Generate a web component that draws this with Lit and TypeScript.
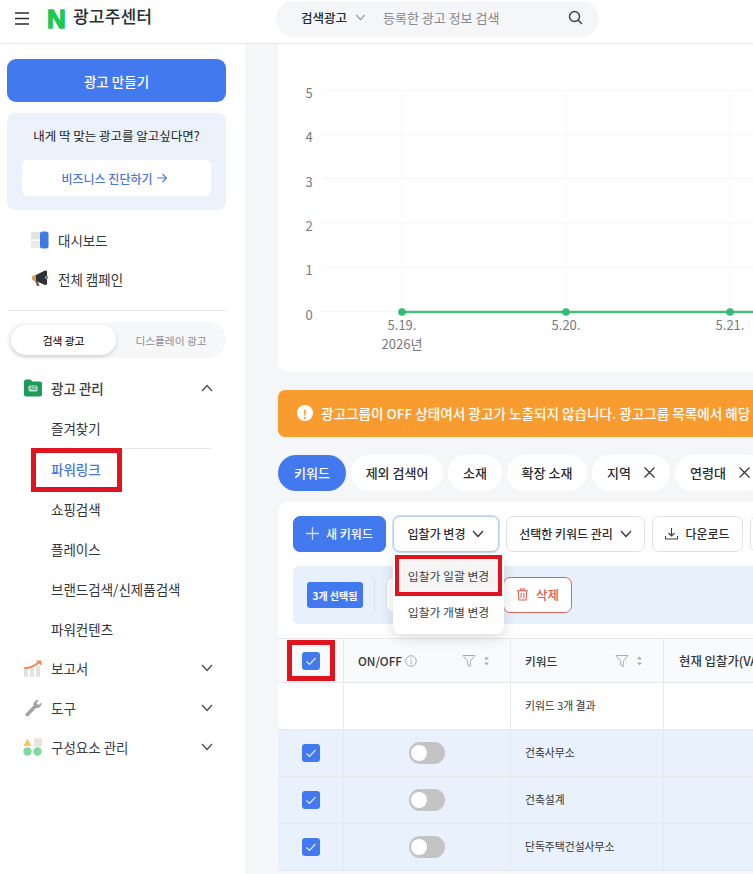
import { LitElement, html, css, svg } from 'lit';
import { customElement } from 'lit/decorators.js';

const chevron = (up = false) => html`<svg class="chev" viewBox="0 0 12 8" aria-hidden="true">
  <path d=${up ? 'M1 7l5-5.5L11 7' : 'M1 1l5 5.5L11 1'} fill="none" stroke="currentColor" stroke-width="1.2"/>
</svg>`;

const cross = html`<svg class="x" viewBox="0 0 11 11" aria-hidden="true"><path d="M0.5 0.5l10 10M10.5 0.5l-10 10" stroke="#2b2d31" stroke-width="1.1"/></svg>`;

const check = html`<span class="check"><svg viewBox="0 0 18 18" aria-hidden="true">
  <path d="M4.5 9.5l3 3 6-6.5" fill="none" stroke="#dfe9fc" stroke-width="1.2"/>
</svg></span>`;

const filterSort = html`<span class="tools">
  <svg class="funnel" viewBox="0 0 14 14" aria-hidden="true"><path d="M1 1.500h12L8.300 7.200V12.500L5.700 11V7.200z" fill="none" stroke="#a9adb3" stroke-width="1"/></svg>
  <svg class="sort" viewBox="0 0 7 12" aria-hidden="true"><path d="M3.500 1.500L6 4.500H1zM3.500 10.500L1 7.500h5z" fill="#a9adb3"/></svg>
</span>`;

/** Sidebar navigation with the search/display toggle. */
@customElement('side-nav')
export class SideNav extends LitElement {
  render() {
    return html`
      <button class="create">광고 만들기</button>
      <div class="promo">
        <p>내게 딱 맞는 광고를 알고싶다면?</p>
        <button>
          비즈니스 진단하기
          <svg viewBox="0 0 10 10" aria-hidden="true"><path d="M0 5h9M5.500 1l4 4-4 4" fill="none" stroke="#4a78d8" stroke-width="1.100"/></svg>
        </button>
      </div>
      <a class="top first">
        <svg viewBox="0 0 20 18" aria-hidden="true">
          <rect x="1" y="1" width="10" height="7.500" fill="#e4e4e0"/><rect x="1" y="10" width="10" height="7" fill="#ecebe6"/>
          <rect x="10" y="0.500" width="8.500" height="17" rx="2.500" fill="#3f7ae8"/>
        </svg>
        대시보드
      </a>
      <a class="top">
        <svg viewBox="0 0 20 18" aria-hidden="true">
          <circle cx="5" cy="8" r="3" fill="#dc9a52"/>
          <path d="M6 5L15 0.500 17 1V14.500L15 15 6 11z" fill="#2f3136"/>
          <circle cx="16.500" cy="7.500" r="1.800" fill="#85888e"/><path d="M5 11h3l1.500 5H7z" fill="#7d6243"/>
        </svg>
        전체 캠페인
      </a>
      <hr />
      <div class="switch"><span class="on">검색 광고</span><span>디스플레이 광고</span></div>
      <a class="group open">
        <svg viewBox="0 0 20 18" aria-hidden="true">
          <path d="M2.500 0.500h5l2 2h7.500a2 2 0 0 1 2 2v11a2 2 0 0 1-2 2h-14a2 2 0 0 1-2-2v-13a2 2 0 0 1 2-2z" fill="#1f9a5b"/>
          <rect x="5.500" y="6.500" width="9" height="6" rx="1.500" fill="#bfe6d0"/>
          <text x="10" y="11.300" text-anchor="middle" class="ad">AD</text>
        </svg>
        <b>광고 관리</b>${chevron(true)}
      </a>
      <a class="sub fav">즐겨찾기</a>
      <a class="sub active">파워링크</a>
      <a class="sub">쇼핑검색</a>
      <a class="sub">플레이스</a>
      <a class="sub">브랜드검색/신제품검색</a>
      <a class="sub">파워컨텐츠</a>
      <a class="group">
        <svg viewBox="0 0 20 18" aria-hidden="true">
          <rect x="1" y="11" width="4" height="7" fill="#e6e3de"/><rect x="7" y="9" width="4" height="9" fill="#e6e3de"/><rect x="13" y="7" width="4" height="11" fill="#e6e3de"/>
          <path d="M1 9.500C7 9 12 7 16 3" fill="none" stroke="#ee8a5a" stroke-width="2"/><path d="M13 1.500h5.500V7z" fill="#ee8a5a"/>
        </svg>
        보고서${chevron()}
      </a>
      <a class="group">
        <svg viewBox="0 0 20 18" aria-hidden="true">
          <path d="M2 15.500L10.500 6.500C10 3.500 12.500 0.500 16 1L13.500 4l2 2 3-2.500c.5 3.500-2.500 6-5.500 5.500L4.500 18z" fill="#a3a4a2"/>
        </svg>
        도구${chevron()}
      </a>
      <a class="group">
        <svg viewBox="0 0 20 18" aria-hidden="true">
          <path d="M4.500 0.500L8.500 8H0.500z" fill="#f2c75c"/><rect x="11" y="0.500" width="8" height="8" fill="#e7e3de"/>
          <circle cx="4.500" cy="13.500" r="4.200" fill="#7ed99a"/><circle cx="14.500" cy="13.500" r="4.200" fill="#7ed99a"/>
        </svg>
        구성요소 관리${chevron()}
      </a>
    `;
  }

  static styles = css`
    :host {
      display: block;
      width: 245px;
      flex: none;
      background: #fff;
      box-sizing: border-box;
      padding: 15px 19px 0 7px;
      font-family: 'Noto Sans CJK KR', 'Noto Sans', sans-serif;
      color: #33363b;
      font-size: 13.5px;
    }
    button {
      font: inherit;
      border: none;
      cursor: pointer;
    }
    .create {
      display: block;
      width: 100%;
      height: 43px;
      border-radius: 9px;
      background: #4379ee;
      color: #fff;
      font-weight: 500;
    }
    .promo {
      margin-top: 11px;
      height: 97px;
      box-sizing: border-box;
      padding: 13px 15px 0;
      background: #ebf2fc;
      border-radius: 8px;
      text-align: center;
    }
    .promo p {
      margin: 0 0 14px;
      font-size: 12.5px;
      line-height: 20px;
      color: #222;
    }
    .promo button {
      display: flex;
      align-items: center;
      justify-content: center;
      gap: 4px;
      width: 100%;
      height: 36px;
      padding: 0 5px 0 0;
      border-radius: 6px;
      background: #fff;
      color: #4a78d8;
      font-size: 12px;
      font-weight: 500;
    }
    .promo button svg {
      width: 10px;
      height: 10px;
    }
    a {
      display: flex;
      align-items: center;
      height: 40px;
    }
    a svg {
      width: 20px;
      height: 18px;
      flex: none;
      margin-right: 8px;
    }
    .ad {
      font-family: 'Liberation Sans', sans-serif;
      font-size: 4.500px;
      font-weight: 700;
      fill: #1f9a5b;
    }
    .top {
      height: 39px;
      padding-left: 23px;
    }
    .first {
      margin-top: 10px;
    }
    hr {
      margin: 12px 0 11px 1px;
      border: none;
      border-top: 1px solid #e8e9eb;
    }
    .switch {
      display: flex;
      height: 36px;
      border-radius: 18px;
      background: #f6f7f9;
      font-size: 10.700px;
      color: #8a8d92;
    }
    .switch span {
      flex: 1;
      display: flex;
      align-items: center;
      justify-content: center;
    }
    .switch .on {
      flex: none;
      width: 105px;
      margin: 3px 0 3px 4px;
      background: #fff;
      border-radius: 15px;
      color: #26282c;
      font-weight: 500;
      box-shadow: 0 2px 4px rgba(0, 0, 0, 0.14);
    }
    .group {
      padding: 0 13px 0 16px;
      height: 39.500px;
      color: #3a3d42;
    }
    .group.open {
      margin-top: 10px;
    }
    .group b {
      font-weight: 500;
    }
    .chev {
      width: 12px;
      height: 8px;
      margin: 0 0 0 auto;
      color: #44474c;
    }
    .sub {
      padding-left: 44px;
    }
    .fav {
      position: relative;
      height: 41px;
      box-sizing: border-box;
      padding-bottom: 1px;
    }
    .fav::after {
      content: '';
      position: absolute;
      left: 44px;
      right: 15px;
      bottom: 0;
      border-bottom: 1px solid #e8e9eb;
    }
    .active {
      position: relative;
      color: #4a78e0;
      font-weight: 500;
    }
    .active::after {
      content: '';
      position: absolute;
      left: 24px;
      top: -1px;
      width: 91px;
      height: 44px;
      box-sizing: border-box;
      border: 5px solid #e0141f;
    }
  `;
}

@customElement('trend-chart')
export class TrendChart extends LitElement {
  render() {
    const rows = [5, 4, 3, 2, 1, 0];
    const xs = [124, 288, 452];
    return html`<svg viewBox="0 0 1000 328" width="1000" height="328">
      ${xs.map((x) => svg`<line x1=${x} x2=${x} y1="46" y2="268" stroke="#f7f7f8"/>`)}
      ${rows.map((n, i) => {
        const y = 46 + i * 44.3;
        return svg`<line x1="44" x2="1000" y1=${y} y2=${y} stroke="#f5f5f6"/>
          <text x="31" y=${y + 8} text-anchor="middle" class="lab">${n}</text>`;
      })}
      <line x1="124" x2="1000" y1="268" y2="268" stroke="#46bd7c" stroke-width="2.500"/>
      ${xs.map((x) => svg`<circle cx=${x} cy="268" r="3.800" fill="#32bd70"/>`)}
      ${['5.19.', '5.20.', '5.21.'].map(
        (t, i) => svg`<text x=${xs[i]} y="286" text-anchor="middle" class="lab">${t}</text>`
      )}
      <text x="124" y="305" text-anchor="middle" class="lab">2026년</text>
    </svg>`;
  }

  static styles = css`
    :host {
      display: block;
      height: 328px;
      background: #fff;
      border-radius: 0 0 10px 10px;
    }
    svg {
      display: block;
    }
    .lab {
      font-family: 'Noto Sans CJK KR', 'Noto Sans', sans-serif;
      font-size: 13px;
      fill: #777a7f;
    }
  `;
}

@customElement('keyword-table')
export class KeywordTable extends LitElement {
  render() {
    const keywords = ['건축사무소', '건축설계', '단독주택건설사무소'];
    return html`
      <div class="row head">
        <div class="c mid boxed">${check}</div>
        <div class="c onoff">ON/OFF
          <svg class="info" viewBox="0 0 12 12" aria-hidden="true"><circle cx="6" cy="6" r="5.300" fill="none" stroke="#a9adb3"/><path d="M6 5.200V9.500M6 2.500v1.200" stroke="#a9adb3"/></svg>
          ${filterSort}
        </div>
        <div class="c">키워드 ${filterSort}</div>
        <div class="c price">현재 입찰가(VAT미포함)</div>
      </div>
      <div class="row">
        <div class="c"></div><div class="c"></div><div class="c small">키워드 3개 결과</div><div class="c"></div>
      </div>
      ${keywords.map(
        (k) => html`<div class="row sel">
          <div class="c mid">${check}</div>
          <div class="c mid"><span class="toggle"></span></div>
          <div class="c small">${k}</div>
          <div class="c"></div>
        </div>`
      )}
    `;
  }

  static styles = css`
    :host {
      display: block;
      font-size: 11.700px;
      color: #33363b;
      background: #fff;
      border-top: 1px solid #e7e8ea;
    }
    .row {
      display: grid;
      grid-template-columns: 65px 167px 153px 1fr;
      height: 47px;
      box-sizing: border-box;
      border-bottom: 1px solid #e7e8ea;
    }
    .row.head {
      height: 44px;
      background: #f9fafb;
      font-weight: 500;
    }
    .row.sel {
      background: #e9f1fc;
    }
    .c {
      display: flex;
      align-items: center;
      padding-left: 14px;
      border-left: 1px solid #e7e8ea;
      min-width: 0;
      white-space: nowrap;
    }
    .c:first-child {
      border-left: none;
    }
    .mid {
      justify-content: center;
      padding: 0;
    }
    .price {
      padding-left: 15px;
      font-size: 12.400px;
    }
    .small {
      font-size: 10.800px;
      font-weight: 400;
      padding-bottom: 2px;
      box-sizing: border-box;
    }
    .boxed {
      position: relative;
    }
    .boxed::after {
      content: '';
      position: absolute;
      left: 9px;
      top: 1px;
      width: 48px;
      height: 41px;
      box-sizing: border-box;
      border: 5px solid #e0141f;
    }
    .check {
      display: block;
      width: 18px;
      height: 18px;
      border-radius: 3px;
      background: #4379ee;
    }
    .check svg {
      display: block;
    }
    .info {
      width: 12px;
      height: 12px;
      margin-left: 3px;
    }
    .tools {
      margin-left: auto;
      margin-right: 20px;
      display: flex;
      align-items: center;
      gap: 7px;
    }
    .funnel {
      width: 14px;
      height: 14px;
    }
    .sort {
      width: 7px;
      height: 12px;
    }
    .toggle {
      position: relative;
      display: block;
      width: 36px;
      height: 22px;
      border-radius: 11px;
      background: #c4c4c4;
    }
    .toggle::after {
      content: '';
      position: absolute;
      left: 2px;
      top: 3px;
      width: 16px;
      height: 16px;
      border-radius: 50%;
      background: #fff;
    }
  `;
}

@customElement('app-root')
export class AppRoot extends LitElement {
  render() {
    return html`
      <header>
        <svg class="burger" viewBox="0 0 14 13" aria-hidden="true"><path d="M0 1h14M0 6.500h14M0 12h14" stroke="#2b2d31" stroke-width="1.500"/></svg>
        <span class="logo">N</span>
        <strong>광고주센터</strong>
        <div class="search">
          <b>검색광고</b>${chevron()}
          <span class="hint">등록한 광고 정보 검색</span>
          <svg class="glass" viewBox="0 0 15 15" aria-hidden="true"><circle cx="6.500" cy="6.500" r="5" fill="none" stroke="#3a3d42" stroke-width="1.400"/><path d="M10 10l4 4" stroke="#3a3d42" stroke-width="1.400"/></svg>
        </div>
      </header>
      <div class="body">
        <side-nav></side-nav>
        <main>
          <trend-chart></trend-chart>
          <div class="alert">
            <span class="bang">!</span>
            광고그룹이 OFF 상태여서 광고가 노출되지 않습니다. 광고그룹 목록에서 해당
          </div>
          <nav>
            <span class="tab on">키워드</span>
            <span class="tab w92">제외 검색어</span>
            <span class="tab w54">소재</span>
            <span class="tab w80">확장 소재</span>
            <span class="tab w78">지역 ${cross}</span>
            <span class="tab w90">연령대 ${cross}</span>
          </nav>
          <section>
            <div class="bar">
              <button class="primary">
                <svg viewBox="0 0 12 12" aria-hidden="true"><path d="M6 0v12M0 6h12" stroke="#cfdcfa" stroke-width="1.200"/></svg>
                새 키워드
              </button>
              <div class="wrap">
                <button class="focus">입찰가 변경 ${chevron()}</button>
                <div class="menu">
                  <div class="item picked">입찰가 일괄 변경</div>
                  <div class="item">입찰가 개별 변경</div>
                </div>
              </div>
              <button class="b139">선택한 키워드 관리 ${chevron()}</button>
              <button class="b91">
                <svg viewBox="0 0 13 13" aria-hidden="true"><path d="M6.500 1v8M3.500 6l3 3 3-3M0.500 9v3h12V9" fill="none" stroke="#3a3d42" stroke-width="1.100"/></svg>
                다운로드
              </button>
              <button class="b91"></button>
            </div>
            <div class="selected">
              <span class="count">3개 선택됨</span>
              <span class="sep"></span>
              <button class="ghost"></button>
              <button class="del">
                <svg viewBox="0 0 13 14" aria-hidden="true"><path d="M0.500 3h12M4.500 3V1h4v2M2 3l.7 10h7.600L11 3M5 5.500V11M8 5.500V11" fill="none" stroke="#df5a4e" stroke-width="1.100"/></svg>
                삭제
              </button>
            </div>
          </section>
          <keyword-table></keyword-table>
        </main>
      </div>
    `;
  }

  static styles = css`
    :host {
      display: block;
      width: 753px;
      height: 874px;
      overflow: hidden;
      background: #f5f6f8;
      font-family: 'Noto Sans CJK KR', 'Noto Sans', sans-serif;
      color: #33363b;
    }
    header {
      display: flex;
      align-items: center;
      height: 44px;
      box-sizing: border-box;
      padding: 0 0 6px 15px;
      background: #fff;
      border-bottom: 1px solid #e6e7e9;
    }
    .burger {
      width: 14px;
      height: 13px;
      flex: none;
    }
    .logo {
      margin-left: 18px;
      width: 21px;
      font-family: 'Liberation Sans', sans-serif;
      font-size: 26px;
      line-height: 26px;
      font-weight: 700;
      color: #1fc84f;
      -webkit-text-stroke: 1.400px #1fc84f;
    }
    strong {
      margin: 0 0 6px 5px;
      width: 100px;
      font-size: 17.200px;
      font-weight: 500;
      color: #2b2d31;
    }
    .search {
      margin: 0 0 0 103px;
      width: 323px;
      height: 36px;
      box-sizing: border-box;
      padding: 0 16px 2px 25px;
      display: flex;
      align-items: center;
      background: #f5f6f7;
      border-radius: 18px;
      font-size: 12.500px;
    }
    .search b {
      font-weight: 500;
      color: #26282c;
    }
    .search .chev {
      width: 11px;
      height: 7px;
      margin-left: 8px;
      color: #8a8d92;
    }
    .hint {
      margin-left: 17px;
      color: #85888d;
      font-size: 13px;
    }
    .glass {
      margin-left: auto;
      width: 15px;
      height: 15px;
    }
    .body {
      display: flex;
      height: 830px;
    }
    main {
      flex: none;
      width: 1000px;
      margin-left: 33px;
    }
    .alert {
      margin-top: 18px;
      height: 47px;
      box-sizing: border-box;
      padding: 0 0 1px 19px;
      display: flex;
      align-items: center;
      gap: 8px;
      white-space: nowrap;
      background: #f89c30;
      border-radius: 7px;
      color: #fff;
      font-size: 13.600px;
      font-weight: 500;
    }
    .bang {
      display: flex;
      align-items: center;
      justify-content: center;
      width: 16px;
      height: 16px;
      border-radius: 50%;
      background: #fff;
      color: #f89c30;
      font-size: 12px;
      font-weight: 700;
    }
    nav {
      display: flex;
      gap: 5px;
      margin-top: 18px;
    }
    .tab {
      display: flex;
      align-items: center;
      justify-content: center;
      gap: 13px;
      width: 68px;
      height: 36px;
      box-sizing: border-box;
      padding-bottom: 2px;
      border-radius: 18px;
      background: #fff;
      font-size: 13px;
      font-weight: 500;
      color: #2b2d31;
    }
    .tab.on {
      background: #4379ee;
      color: #fff;
    }
    .x {
      width: 11px;
      height: 11px;
    }
    .w92 { width: 92px; }
    .w54 { width: 54px; }
    .w80 { width: 80px; }
    .w78 { width: 78px; }
    .w90 { width: 90px; }
    section {
      margin-top: 11px;
      height: 136px;
      box-sizing: border-box;
      padding: 14px 15px;
      background: #fff;
      border-radius: 10px 10px 0 0;
    }
    .bar {
      display: flex;
      gap: 7px;
      height: 36px;
    }
    button {
      display: flex;
      align-items: center;
      justify-content: center;
      gap: 7px;
      font: inherit;
      font-size: 12px;
      font-weight: 500;
      color: #2b2d31;
      height: 36px;
      background: #fff;
      border: 1px solid #dfe1e4;
      border-radius: 7px;
      box-sizing: border-box;
      padding: 0 0 1px;
    }
    button svg {
      width: 13px;
      height: 13px;
    }
    button .chev {
      width: 12px;
      height: 8px;
      margin: 0;
    }
    .primary {
      width: 93px;
      background: #4379ee;
      border-color: #4379ee;
      color: #fff;
    }
    .wrap {
      position: relative;
    }
    .focus {
      width: 106px;
      border-color: #b8cfe8;
      box-shadow: 0 0 0 1px #cfe0f1;
    }
    .menu {
      position: absolute;
      z-index: 2;
      left: 0;
      top: 38px;
      width: 111px;
      height: 80px;
      background: #fff;
      border-radius: 8px;
      box-shadow: 0 4px 14px rgba(0, 0, 0, 0.14);
      font-size: 11.800px;
      color: #3a3d42;
    }
    .item {
      display: flex;
      align-items: center;
      justify-content: center;
      height: 30px;
    }
    .picked {
      margin: 1px 2px 0;
      height: 41px;
      box-sizing: border-box;
      background: #f5f5f5;
      border: 4px solid #e0141f;
    }
    .b139 {
      width: 139px;
    }
    .b91 {
      width: 91px;
      flex: none;
    }
    .selected {
      margin-top: 14px;
      height: 58px;
      box-sizing: border-box;
      padding-left: 14px;
      display: flex;
      align-items: center;
      background: #e8f0fb;
      border-radius: 6px;
    }
    .count {
      display: flex;
      align-items: center;
      justify-content: center;
      width: 56px;
      height: 26px;
      border-radius: 3px;
      background: #4379ee;
      color: #fff;
      font-size: 10px;
      font-weight: 700;
    }
    .sep {
      margin: 0 11px;
      width: 1px;
      height: 32px;
      background: #d8dfe9;
    }
    .ghost {
      width: 108px;
    }
    .del {
      margin-left: 9px;
      width: 69px;
      border-color: #e0685c;
      color: #df5a4e;
      font-size: 12.500px;
    }
  `;
}
